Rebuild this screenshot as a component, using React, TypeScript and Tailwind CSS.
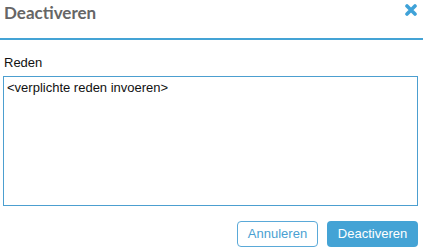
import React, { useState } from 'react';

const App: React.FC = () => {
    const [reason, setReason] = useState<string>('<verplichte reden invoeren>');

    return (
        <div className="w-[423px] h-[252px] bg-white relative" style={{ fontFamily: '"Liberation Sans", Arial, sans-serif' }}>
            <div className="h-[38px] flex items-start justify-between pl-[4px] pr-[6px] pt-[1px]">
                <h2 className="text-[17px] font-bold text-[#666666] leading-[24px]" style={{ fontFamily: 'Lato, "Open Sans", sans-serif' }}>
                    Deactiveren
                </h2>
                <button className="mt-[3px] w-[12px] h-[12px] flex items-center justify-center">
                    <svg width="12" height="12" viewBox="0 0 12 12">
                        <path d="M2 2 L10 10 M10 2 L2 10" stroke="#3fa2d8" strokeWidth="3.6" strokeLinecap="round" />
                    </svg>
                </button>
            </div>
            <div className="h-[2px] bg-[#44a3d5]" />
            <div className="px-[3px] pt-[15px]">
                <label className="block text-[13px] text-[#111] leading-[15px] pl-[1px] mb-[6px]">Reden</label>
                <textarea
                    autoFocus
                    onFocus={e => {
                        const len = e.currentTarget.value.length;
                        e.currentTarget.setSelectionRange(len, len);
                    }}
                    className="block w-[415px] h-[130px] border border-[#4c9fd0] px-[3px] py-[2px] text-[13px] leading-[18px] text-[#111] resize-none outline-none"
                    value={reason}
                    onChange={e => setReason(e.target.value)}
                />
            </div>
            <div className="flex justify-end gap-[9px] pr-[5px] mt-[15px]">
                <button className="h-[26px] w-[81px] rounded-[4px] border border-[#5aa9d8] text-[#4a9fd2] text-[13px] bg-white">
                    Annuleren
                </button>
                <button className="h-[26px] w-[91px] rounded-[4px] bg-[#44a3d5] text-white text-[13px]">
                    Deactiveren
                </button>
            </div>
        </div>
    );
};

export default App;
